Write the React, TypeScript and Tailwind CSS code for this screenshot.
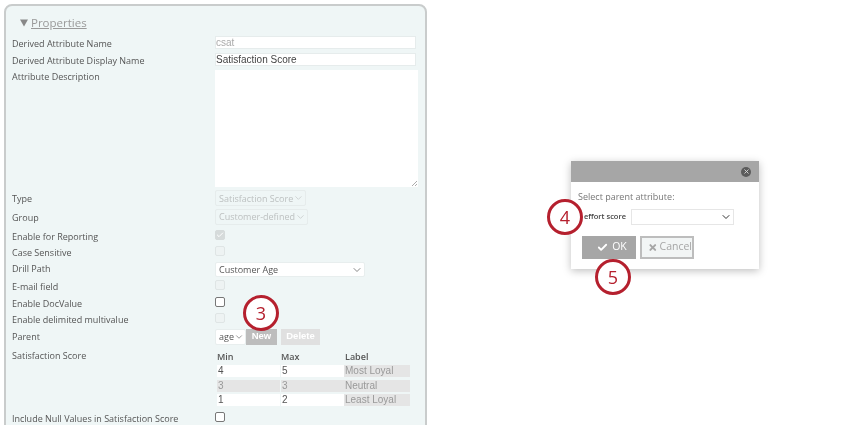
import type { ReactNode } from "react";
import { Check, ChevronDown, X } from "lucide-react";

function Row({
  label,
  className,
  tight,
  children,
}: {
  label: string;
  className: string;
  tight?: boolean;
  children?: ReactNode;
}) {
  return (
    <div className={`flex items-center ${className}`}>
      <div className={`w-[203px] shrink-0 whitespace-nowrap ${tight ? "" : "pt-[2px]"}`}>{label}</div>
      <div className="flex items-center">{children}</div>
    </div>
  );
}

function Select({ text, className, muted }: { text: string; className: string; muted?: boolean }) {
  return (
    <div
      className={`flex items-center justify-between rounded-[2px] border pl-[3px] pr-[1px] text-[9px] ${className} ${
        muted ? "border-[#e6ecec] text-[#bdc1c1]" : "border-[#e8eeee] bg-white text-[#555]"
      }`}
    >
      <span className="whitespace-nowrap pt-[1px]">{text}</span>
      <ChevronDown size={12} strokeWidth={1.4} />
    </div>
  );
}

function Box({ disabled, checked }: { disabled?: boolean; checked?: boolean }) {
  const tone = checked ? "border-[#d6dbdb] bg-[#d6dbdb]" : disabled ? "border-[#dfe5e5] bg-[#eef3f3]" : "border-[#777] bg-white";
  return (
    <div className={`mb-[2px] flex h-[10px] w-[10px] items-center justify-center rounded-[2px] border ${tone}`}>
      {checked && <Check size={8} strokeWidth={3} className="text-white" />}
    </div>
  );
}

function Score({ min, max, label, muted }: { min: string; max: string; label: string; muted?: boolean }) {
  const cell = muted ? "bg-[#e5e5e5] text-[#999]" : "bg-white text-[#555]";
  return (
    <div className="flex h-[12px] font-['Liberation_Sans',sans-serif] text-[10px] leading-[12px]">
      <div className={`ml-[2px] w-[63px] pl-[1px] ${cell}`}>{min}</div>
      <div className={`ml-px w-[63px] pl-[1px] ${cell}`}>{max}</div>
      <div className="w-[66px] bg-[#e5e5e5] pl-px text-[#999]">{label}</div>
    </div>
  );
}

function Marker({ n, className }: { n: string; className: string }) {
  return (
    <div
      className={`absolute flex h-[36px] w-[36px] items-center justify-center rounded-full border-[3px] border-[#b5202e] bg-white text-[18px] text-[#b5202e] ${className}`}
    >
      {n}
    </div>
  );
}

export default function App() {
  return (
    <div className="relative h-[425px] w-[850px] overflow-hidden bg-white font-['Open_Sans',sans-serif] text-[9px] text-[#555] blur-[0.3px]">
      <div className="ml-[4px] mt-[4px] h-[440px] w-[423px] rounded-[8px] border-2 border-[#c9cccc] bg-[#eff6f6] pl-[6px]">
        <div className="flex h-[28px] items-center pl-[8px] pt-[6px] text-[11.5px] text-[#9a9a9a]">
          <svg className="mr-[3px]" width="8" height="8" viewBox="0 0 8 8">
            <path d="M0 0.5H8L4 7.5Z" fill="#888" />
          </svg>
          <span className="underline">Properties</span>
        </div>

        <Row label="Derived Attribute Name" className="h-[17px]">
          <div className="h-[13px] w-[201px] border border-[#e6ecec] bg-white font-['Liberation_Sans',sans-serif] text-[10px] leading-[11px] text-[#aaa]">
            csat
          </div>
        </Row>
        <Row label="Derived Attribute Display Name" className="h-[17px]">
          <div className="h-[13px] w-[201px] border border-[#e6ecec] bg-white font-['Liberation_Sans',sans-serif] text-[10px] leading-[11px] text-[#444]">
            Satisfaction Score
          </div>
        </Row>
        <div className="flex h-[122px] pt-[2px]">
          <div className="w-[203px] shrink-0 leading-[14px]">Attribute Description</div>
          <div className="relative h-[117px] w-[203px] bg-white">
            <svg className="absolute bottom-px right-px" width="6" height="6" viewBox="0 0 6 6">
              <path d="M1 6 6 1M4 6 6 4" stroke="#888" strokeWidth="0.7" />
            </svg>
          </div>
        </div>

        <Row label="Type" className="h-[18px]" tight>
          <Select text="Satisfaction Score" className="mb-[2px] h-[16px] w-[91px]" muted />
        </Row>
        <Row label="Group" className="h-[19px]" tight>
          <Select text="Customer-defined" className="mb-[2px] h-[16px] w-[93px]" muted />
        </Row>
        <Row label="Enable for Reporting" className="h-[17px]">
          <Box disabled checked />
        </Row>
        <Row label="Case Sensitive" className="h-[16px]">
          <Box disabled />
        </Row>
        <Row label="Drill Path" className="h-[17px]" tight>
          <Select text="Customer Age" className="mt-[2px] h-[15px] w-[150px]" />
        </Row>
        <Row label="E-mail field" className="h-[17px]">
          <Box disabled />
        </Row>
        <Row label="Enable DocValue" className="h-[17px]">
          <Box />
        </Row>
        <Row label="Enable delimited multivalue" className="h-[16px]">
          <Box disabled />
        </Row>
        <Row label="Parent" className="h-[19px]" tight>
          <Select text="age" className="h-[16px] w-[31px]" />
          <div className="flex h-[16px] w-[31px] items-center justify-center bg-[#bdbdbd] font-['Liberation_Sans',sans-serif] text-[9.5px] font-bold text-white">
            New
          </div>
          <div className="ml-[4px] flex h-[16px] w-[39px] items-center justify-center bg-[#e0e0e0] font-['Liberation_Sans',sans-serif] text-[9.5px] font-bold text-white">
            Delete
          </div>
        </Row>
        <div className="flex h-[64px]">
          <div className="w-[203px] shrink-0 pt-[3px] leading-[14px]">Satisfaction Score</div>
          <div>
            <div className="flex h-[19px] items-end pb-[2px] font-semibold text-[#555]">
              <span className="ml-[2px] w-[64px]">Min</span>
              <span className="w-[64px]">Max</span>
              <span>Label</span>
            </div>
            <div className="flex flex-col gap-[2.5px]">
              <Score min="4" max="5" label="Most Loyal" />
              <Score min="3" max="3" label="Neutral" muted />
              <Score min="1" max="2" label="Least Loyal" />
            </div>
          </div>
        </div>
        <Row label="Include Null Values in Satisfaction Score" className="h-[16px]">
          <Box />
        </Row>
      </div>

      <Marker n="3" className="left-[243px] top-[295px]" />

      {/* parent attribute dialog */}
      <div className="absolute left-[571px] top-[161px] h-[108px] w-[188px] bg-white shadow-[0_2px_8px_rgba(0,0,0,0.25)]">
        <div className="flex h-[21px] items-center justify-end bg-[#a6a6a6] pr-[8px]">
          <div className="flex h-[10px] w-[10px] items-center justify-center rounded-full bg-[#5c5c5c]">
            <X size={7} strokeWidth={3} className="text-[#ddd]" />
          </div>
        </div>
        <div className="pl-[7px] pt-[8px] text-[#777]">Select parent attribute:</div>
        <div className="mt-[5px] flex h-[16px] items-center pl-[13px] text-[7.5px] font-semibold text-[#444]">
          <span className="w-[47px] whitespace-nowrap">effort score</span>
          <div className="flex h-[16px] w-[103px] items-center justify-end border border-[#e6e6e6] pr-[1px]">
            <ChevronDown size={12} strokeWidth={2} className="text-[#333]" />
          </div>
        </div>
        <div className="ml-[11px] mt-[11px] flex gap-[4px] text-[10.5px]">
          <div className="flex h-[23px] w-[54px] items-center justify-center gap-[4px] bg-[#a6a6a6] pl-[6px] text-white">
            <Check size={11} strokeWidth={4} />
            OK
          </div>
          <div className="flex h-[23px] w-[54px] items-center justify-center gap-[2px] border-2 border-[#bdbdbd] bg-[#f2f5f5] pl-[6px] text-[#a6a6a6]">
            <X size={11} strokeWidth={5} />
            Cancel
          </div>
        </div>
      </div>

      <Marker n="4" className="left-[547px] top-[199px]" />
      <Marker n="5" className="left-[595px] top-[259px]" />
    </div>
  );
}
